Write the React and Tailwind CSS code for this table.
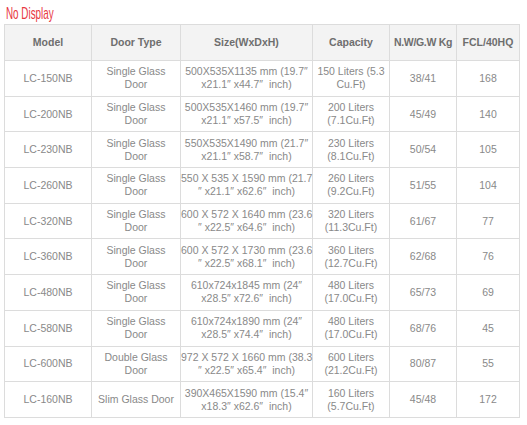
import React from "react";

const rows = [
  ["LC-150NB", "Single Glass Door", ["500X535X1135 mm (19.7\u2033", "x21.1\u2033 x44.7\u2033  inch)"], ["150 Liters (5.3", "Cu.Ft)"], "38/41", "168"],
  ["LC-200NB", "Single Glass Door", ["500X535X1460 mm (19.7\u2033", "x21.1\u2033 x57.5\u2033  inch)"], ["200 Liters", "(7.1Cu.Ft)"], "45/49", "140"],
  ["LC-230NB", "Single Glass Door", ["550X535X1490 mm (21.7\u2033", "x21.1\u2033 x58.7\u2033  inch)"], ["230 Liters", "(8.1Cu.Ft)"], "50/54", "105"],
  ["LC-260NB", "Single Glass Door", ["550 X 535 X 1590 mm (21.7", "\u2033 x21.1\u2033 x62.6\u2033  inch)"], ["260 Liters", "(9.2Cu.Ft)"], "51/55", "104"],
  ["LC-320NB", "Single Glass Door", ["600 X 572 X 1640 mm (23.6", "\u2033 x22.5\u2033 x64.6\u2033  inch)"], ["320 Liters", "(11.3Cu.Ft)"], "61/67", "77"],
  ["LC-360NB", "Single Glass Door", ["600 X 572 X 1730 mm (23.6", "\u2033 x22.5\u2033 x68.1\u2033  inch)"], ["360 Liters", "(12.7Cu.Ft)"], "62/68", "76"],
  ["LC-480NB", "Single Glass Door", ["610x724x1845 mm (24\u2033", "x28.5\u2033 x72.6\u2033  inch)"], ["480 Liters", "(17.0Cu.Ft)"], "65/73", "69"],
  ["LC-580NB", "Single Glass Door", ["610x724x1890 mm (24\u2033", "x28.5\u2033 x74.4\u2033  inch)"], ["480 Liters", "(17.0Cu.Ft)"], "68/76", "45"],
  ["LC-600NB", "Double Glass Door", ["972 X 572 X 1660 mm (38.3", "\u2033 x22.5\u2033 x65.4\u2033  inch)"], ["600 Liters", "(21.2Cu.Ft)"], "80/87", "55"],
  ["LC-160NB", "Slim Glass Door", ["390X465X1590 mm (15.4\u2033", "x18.3\u2033 x62.6\u2033  inch)"], ["160 Liters", "(5.7Cu.Ft)"], "45/48", "172"],
];

function Lines({ v }) {
  if (Array.isArray(v)) {
    return (
      <>
        {v.map((t, i) => (
          <div key={i} className="whitespace-pre">{t}</div>
        ))}
      </>
    );
  }
  return v;
}

function DoorType({ v }) {
  if (v === "Slim Glass Door") return v;
  const parts = v.split(" ");
  return (
    <>
      <div>{parts[0] + " " + parts[1]}</div>
      <div>{parts[2]}</div>
    </>
  );
}

export default function App() {
  const cell = "border border-[#dcdcdc] text-center align-middle p-0";
  return (
    <div className="w-[527px] h-[425px] bg-white overflow-hidden" style={{ fontFamily: '"Liberation Sans", Arial, sans-serif' }}>
      <div className="h-[24px] pl-[6px] flex items-end pb-[1px]">
        <span className="inline-block origin-left scale-x-[0.58] text-[17px] leading-[18px] text-[#e8373f] whitespace-nowrap">No Display</span>
      </div>
      <table className="ml-[4px] w-[515px] border-collapse table-fixed text-[10.5px] leading-[13px] text-[#898989]">
        <colgroup>
          <col className="w-[87px]" />
          <col className="w-[89px]" />
          <col className="w-[132px]" />
          <col className="w-[77px]" />
          <col className="w-[67px]" />
          <col className="w-[63px]" />
        </colgroup>
        <thead>
          <tr className="h-[36px] bg-[#f3f3f3] text-[#6e6e6e] font-bold">
            <th className={cell}>Model</th>
            <th className={cell}>Door Type</th>
            <th className={cell}>Size(WxDxH)</th>
            <th className={cell}>Capacity</th>
            <th className={cell + " tracking-[-0.3px]"}>N.W/G.W Kg</th>
            <th className={cell}>FCL/40HQ</th>
          </tr>
        </thead>
        <tbody>
          {rows.map((r) => (
            <tr key={r[0]} className="h-[35.7px]">
              <td className={cell}>{r[0]}</td>
              <td className={cell}><DoorType v={r[1]} /></td>
              <td className={cell}><Lines v={r[2]} /></td>
              <td className={cell}><Lines v={r[3]} /></td>
              <td className={cell}>{r[4]}</td>
              <td className={cell}>{r[5]}</td>
            </tr>
          ))}
        </tbody>
      </table>
    </div>
  );
}
